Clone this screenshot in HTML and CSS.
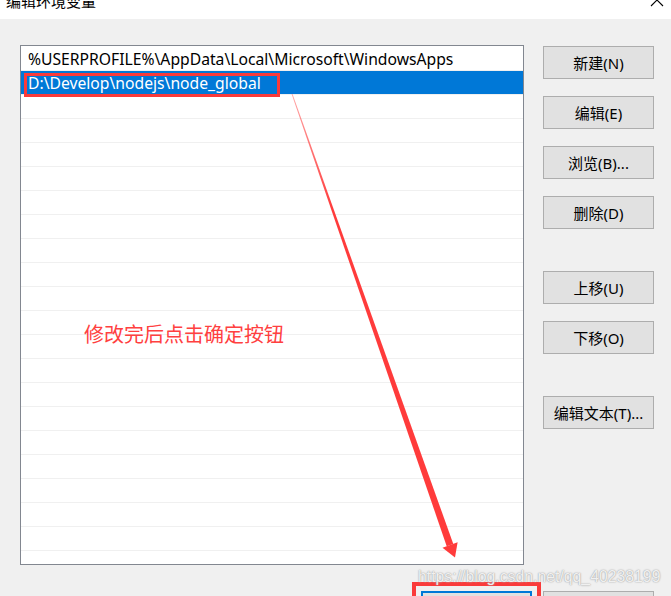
FILE: index.html
```html
<!DOCTYPE html>
<html lang="zh-CN">

<head>
    <meta charset="UTF-8">
    <meta name="viewport" content="width=device-width, initial-scale=1.0">
    <title>编辑环境变量</title>
    <link rel="stylesheet" href="styles.css">
</head>
<body>
    <div class="dialog">
        <div class="titlebar">
            <span class="title">编辑环境变量</span>
            <svg class="close" width="14" height="14" viewBox="0 0 14 14">
                <path d="M1 1 L13 13 M13 1 L1 13" stroke="#000" stroke-width="1.1" fill="none" />
            </svg>
        </div>

        <div class="content">
            <div class="list">
                <div class="row">%USERPROFILE%\AppData\Local\Microsoft\WindowsApps</div>
                <div class="row selected">D:\Develop\nodejs\node_global</div>
                <div class="row"></div>
                <div class="row"></div>
                <div class="row"></div>
                <div class="row"></div>
                <div class="row"></div>
                <div class="row"></div>
                <div class="row"></div>
                <div class="row"></div>
                <div class="row"></div>
                <div class="row"></div>
                <div class="row"></div>
                <div class="row"></div>
                <div class="row"></div>
                <div class="row"></div>
                <div class="row"></div>
                <div class="row"></div>
                <div class="row"></div>
                <div class="row"></div>
                <div class="row"></div>
                <div class="row"></div>
            </div>

            <div class="side">
                <button class="btn">新建(N)</button>
                <button class="btn">编辑(E)</button>
                <button class="btn">浏览(B)...</button>
                <button class="btn">删除(D)</button>
                <button class="btn group">上移(U)</button>
                <button class="btn">下移(O)</button>
                <button class="btn group">编辑文本(T)...</button>
            </div>
        </div>

        <div class="footer">
            <button class="btn ok">确定</button>
            <button class="btn">取消</button>
        </div>

        <!-- 标注 -->
        <div class="mark mark-path"></div>
        <div class="mark mark-ok"></div>
        <p class="note">修改完后点击确定按钮</p>
        <svg class="arrow" width="671" height="596" viewBox="0 0 671 596">
            <defs>
                <linearGradient id="fade" x1="292" y1="94" x2="455" y2="557" gradientUnits="userSpaceOnUse">
                    <stop offset="0" stop-color="#ff3b3b" stop-opacity="0.45" />
                    <stop offset="0.25" stop-color="#ff3b3b" stop-opacity="1" />
                </linearGradient>
            </defs>
            <polygon points="291.6,94 292.6,94.3 453.3,544 446.7,546.3" fill="url(#fade)" />
            <polygon points="442.5,547.8 457.6,542.3 455,557.5" fill="#ff3b3b" />
        </svg>
        <span class="watermark">https://blog.csdn.net/qq_40238199</span>
    </div>
</body>
</html>
```

FILE: styles.css
```css
* {
    margin: 0;
    padding: 0;
    box-sizing: border-box;
}

body {
    background: #f0f0f0;
    font-family: "Noto Sans", "Noto Sans CJK SC", sans-serif;
    color: #000;
}

.dialog {
    position: relative;
    width: 671px;
    height: 596px;
    overflow: hidden;
}

.titlebar {
    display: flex;
    justify-content: space-between;
    align-items: flex-start;
    height: 19px;
    padding: 0 7px 0 6px;
    background: #fff;
    overflow: hidden;
}

.title {
    margin-top: -8px;
    font-family: "Noto Sans CJK SC", sans-serif;
    font-size: 15px;
    line-height: 18px;
}

.close {
    margin-top: -7px;
}

.content {
    display: flex;
    padding: 26px 0 0 20px;
}

.list {
    width: 504px;
    height: 520px;
    padding-top: 1px;
    border: 1px solid #828790;
    background: #fff;
    overflow: hidden;
}

.row {
    height: 24px;
    padding-left: 7px;
    border-bottom: 1px solid #f0f0f0;
    font-size: 15.7px;
    line-height: 24px;
    white-space: nowrap;
}

.row.selected {
    background: #0078d7;
    color: #fff;
}

.side {
    display: flex;
    flex-direction: column;
    gap: 17px;
    margin-left: 19px;
    padding-top: 1px;
}

.btn {
    width: 111px;
    height: 33px;
    padding-bottom: 1px;
    border: 1px solid #adadad;
    background: #e1e1e1;
    font-family: "Noto Sans", "Noto Sans CJK SC", sans-serif;
    font-size: 15px;
    color: #000;
    appearance: none;
}

.side .group {
    margin-top: 25px;
}

.footer {
    display: flex;
    justify-content: flex-end;
    gap: 11px;
    margin-top: 26px;
    padding-right: 17px;
}

.btn.ok {
    border: 2px solid #0078d7;
}

.mark {
    position: absolute;
    border: 3px solid #fa3a3a;
}

.mark-path {
    left: 24px;
    top: 73px;
    width: 256px;
    height: 24px;
}

.mark-ok {
    left: 412px;
    top: 582px;
    width: 129px;
    height: 30px;
    border-width: 4px;
}

.note {
    position: absolute;
    left: 84px;
    top: 322px;
    font-family: "Noto Sans CJK SC", sans-serif;
    font-size: 20px;
    line-height: 24px;
    color: #ff4040;
}

.arrow {
    position: absolute;
    left: 0;
    top: 0;
    pointer-events: none;
}

.watermark {
    position: absolute;
    left: 418px;
    top: 567px;
    font-family: "Liberation Sans", sans-serif;
    font-size: 15.8px;
    line-height: 20px;
    color: rgba(255, 255, 255, 0.85);
    text-shadow: 0 0 1px #9a9a9a, 0 0 2px #b8b8b8;
}
```
